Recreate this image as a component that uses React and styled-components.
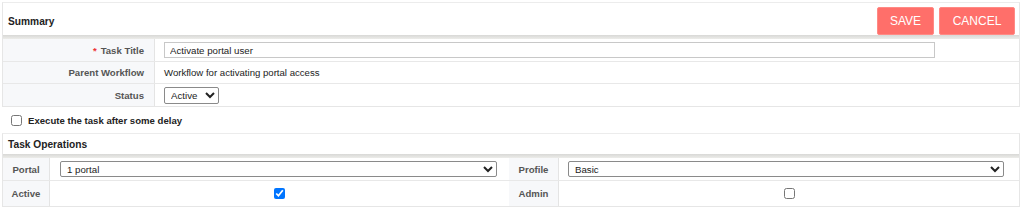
import React from 'react';
import styled, { createGlobalStyle } from 'styled-components';

// Styles
const Global = createGlobalStyle`
  body {
    margin: 0;
    background: #fff;
    font-family: "Liberation Sans", Arial, sans-serif;
    font-size: 9.6px;
    color: #222;
  }
`;

const Page = styled.div`
  padding: 2px 4px 0 2px;
`;

const Panel = styled.div`
  border: 1px solid #e6e6e6;
  border-top-color: #ececec;
`;

const Header = styled.div`
  height: ${props => props.h}px;
  display: flex;
  justify-content: space-between;
  align-items: ${props => (props.buttons ? 'flex-end' : 'center')};
  padding: 0 4px 0 5px;

  h3 {
    margin: 0;
    font-size: 10.2px;
    font-weight: bold;
    color: #222;
    align-self: center;
    padding-top: ${props => (props.buttons ? '4px' : '1px')};
  }
`;

const Band = styled.div`
  height: 4px;
  background: linear-gradient(#d8d8d6, #ecece9);
`;

const Actions = styled.div`
  display: flex;
  gap: 5px;
`;

const Button = styled.button`
  height: 28px;
  width: ${props => props.w}px;
  border: 1px solid #ff8a85;
  border-radius: 2px;
  background: #ff6f6a;
  color: #fff;
  font-family: "Liberation Sans", Arial, sans-serif;
  font-size: 12px;
  text-transform: uppercase;
  padding: 0;
`;

const Row = styled.div`
  display: grid;
  grid-template-columns: ${props => props.cols};
  height: ${props => props.h}px;
  border-bottom: ${props => (props.last ? 'none' : '1px solid #e8e8e8')};
`;

const Label = styled.div`
  background: #f7f8fa;
  border-right: 1px solid #e4e4e4;
  display: flex;
  align-items: center;
  justify-content: ${props => (props.center ? 'center' : 'flex-end')};
  padding-right: ${props => (props.center ? '0' : '10px')};
  font-weight: bold;
  color: #555;

  em {
    color: #e33;
    font-style: normal;
    margin-right: 4px;
  }
`;

const Value = styled.div`
  display: flex;
  align-items: center;
  justify-content: ${props => (props.center ? 'center' : 'flex-start')};
  padding-left: ${props => (props.center ? '0' : `${props.pad || 9}px`)};
  color: #222;
`;

const TextInput = styled.input`
  width: ${props => props.w}px;
  height: 16px;
  box-sizing: border-box;
  border: 1px solid #c8c8c8;
  font-family: "Liberation Sans", Arial, sans-serif;
  font-size: 9.7px;
  padding: 0 5px;
  color: #222;
  outline: none;
`;

const Select = styled.select`
  width: ${props => props.w}px;
  height: ${props => props.h || 16}px;
  box-sizing: border-box;
  border: 1px solid #8a8a8a;
  border-radius: 2px;
  background: #fff;
  font-family: "Liberation Sans", Arial, sans-serif;
  font-size: 9.7px;
  color: #222;
  padding: 0 0 0 2px;
`;

const Check = styled.input`
  width: 11px;
  height: 11px;
  margin: 0;
`;

const Delay = styled.label`
  display: flex;
  align-items: center;
  gap: 6px;
  height: 26px;
  padding: 0 0 0 9px;
  font-weight: bold;
  color: #222;
`;

// Main
const App = () => (
  <Page>
    <Global />

    {/* Summary */}
    <Panel>
      <Header h={32} buttons>
        <h3>Summary</h3>
        <Actions>
          <Button w={57}>Save</Button>
          <Button w={76}>Cancel</Button>
        </Actions>
      </Header>
      <Band />
      <Row cols="152px 1fr" h={22}>
        <Label><em>*</em>Task Title</Label>
        <Value>
          <TextInput w={771} defaultValue="Activate portal user" />
        </Value>
      </Row>
      <Row cols="152px 1fr" h={21}>
        <Label>Parent Workflow</Label>
        <Value>Workflow for activating portal access</Value>
      </Row>
      <Row cols="152px 1fr" h={22} last>
        <Label>Status</Label>
        <Value>
          <Select w={55} h={17} defaultValue="Active">
            <option>Active</option>
            <option>Inactive</option>
          </Select>
        </Value>
      </Row>
    </Panel>

    {/* Delay */}
    <Delay>
      <Check type="checkbox" />
      Execute the task after some delay
    </Delay>

    {/* Task Operations */}
    <Panel>
      <Header h={20}>
        <h3>Task Operations</h3>
      </Header>
      <Band />
      <Row cols="47px 459px 50px 1fr" h={22}>
        <Label center>Portal</Label>
        <Value pad={10}>
          <Select w={437} defaultValue="1 portal">
            <option>1 portal</option>
          </Select>
        </Value>
        <Label center>Profile</Label>
        <Value pad={9}>
          <Select w={436} defaultValue="Basic">
            <option>Basic</option>
          </Select>
        </Value>
      </Row>
      <Row cols="47px 459px 50px 1fr" h={25} last>
        <Label center>Active</Label>
        <Value center>
          <Check type="checkbox" defaultChecked />
        </Value>
        <Label center>Admin</Label>
        <Value center>
          <Check type="checkbox" />
        </Value>
      </Row>
    </Panel>
  </Page>
);

export default App;
